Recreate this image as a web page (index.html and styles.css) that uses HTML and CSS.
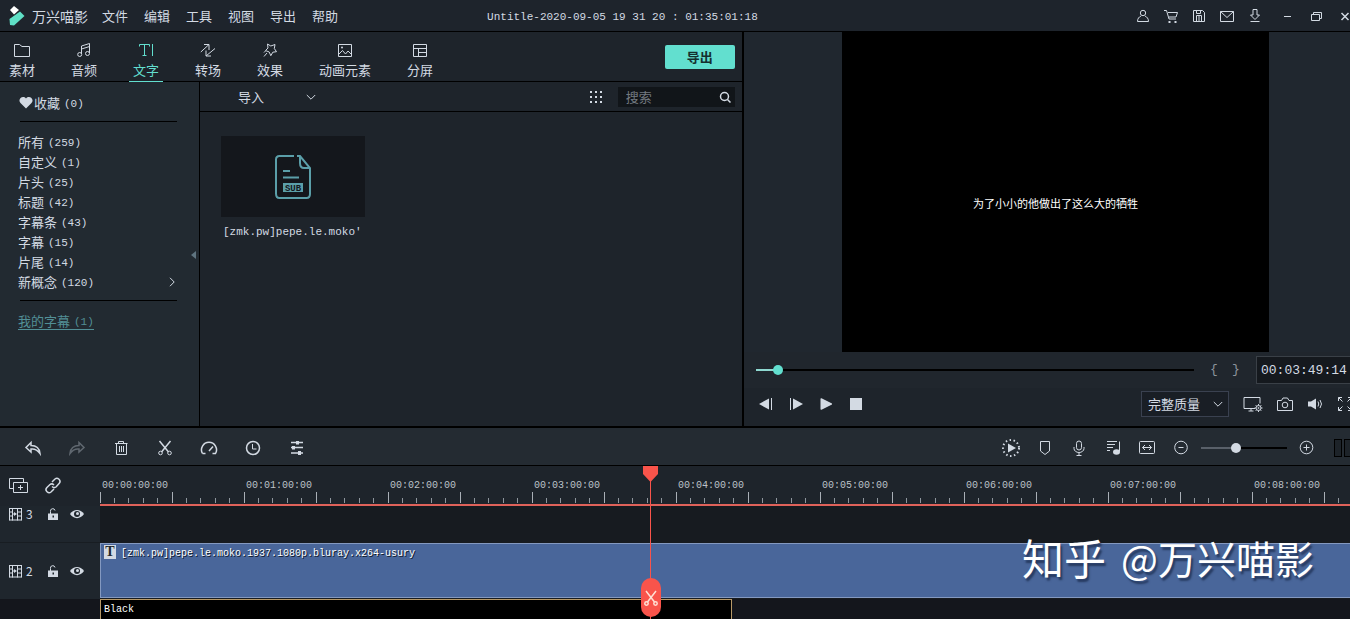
FILE: index.html
```html
<!DOCTYPE html>
<html lang="zh-CN">
<head>
<meta charset="utf-8">
<title>万兴喵影</title>
<link rel="stylesheet" href="styles.css">
</head>
<body>
<svg class="defs" aria-hidden="true">
  <symbol id="film" viewBox="0 0 14 14"><path d="M1.500 1v12.500M4.500 1v12.500M9.500 1v12.500M13.500 1v12.500M1.500 1.500h12M1.500 13h12M1.500 5h3M1.500 9h3M9.500 5h4M9.500 9h4M4.500 7H6"/><path class="fill" d="M6 5l3 2-3 2z"/></symbol>
  <symbol id="lock" viewBox="0 0 14 14"><path d="M4.500 7V4.500a2.300 2.300 0 0 1 4.500-1"/><path class="fill" d="M2 6.500h10V13H2z"/><path class="hole" d="M6.500 8.500h1.500v2H6.500z"/></symbol>
  <symbol id="eye" viewBox="0 0 14 14"><path class="fill" d="M0 7c3.500-5.500 10.500-5.500 14 0-3.500 5.500-10.500 5.500-14 0z"/><circle class="hole" cx="7" cy="7" r="3"/><circle class="fill" cx="7.500" cy="6.500" r="1.500"/></symbol>
  <symbol id="chevron" viewBox="0 0 10 10"><path d="M.8 3l4.200 4.200L9.200 3"/></symbol>
</svg>
<div class="app">
  <header class="titlebar">
    <svg class="logo" viewBox="0 0 18 22"><path d="M2 5l4-4 5 4-5 4.500z" fill="#fff"/><path d="M1.500 14L12 6.500 16.500 11 6 20.500 2 20z" fill="#5fe0c6"/></svg>
    <span class="brand">万兴喵影</span>
    <nav class="menu"><button>文件</button><button>编辑</button><button>工具</button><button>视图</button><button>导出</button><button>帮助</button></nav>
    <h1 class="project">Untitle-2020-09-05 19 31 20 : 01:35:01:18</h1>
    <div class="account">
      <button aria-label="账户"><svg viewBox="0 0 16 16"><circle cx="8" cy="5" r="2.700"/><path d="M2.500 13.500c0-3 1.500-4.500 3.500-5.500M13.500 13.500c0-3-1.500-4.500-3.500-5.500M2.500 13.500h11"/></svg></button>
      <button aria-label="购物车"><svg viewBox="0 0 16 16"><path d="M1 2.500h2.500L6 11h7M5 4.500h9.500L13 9H6"/><path class="fill" d="M5.500 13h2v2h-2zM11.500 13h2v2h-2z"/></svg></button>
      <button aria-label="保存"><svg viewBox="0 0 16 16"><path d="M2.500 2.500h9l2 2v9h-11zM5.500 13.500v-6h5v6M5.500 2.500v3h4v-3M8 7.500v6"/></svg></button>
      <button aria-label="消息"><svg viewBox="0 0 16 16"><path d="M1.500 3.500h13v10h-13zM1.500 3.500L8 9.500l6.500-6"/></svg></button>
      <button aria-label="下载"><svg viewBox="0 0 16 16"><path d="M6 1.500h4V7h2.500L8 11.500 3.500 7H6zM3.500 13.500h9"/></svg></button>
    </div>
    <div class="window">
      <button aria-label="最小化"><svg viewBox="0 0 16 16"><path d="M5 8.500h7"/></svg></button>
      <button aria-label="还原"><svg viewBox="0 0 16 16"><path d="M3.500 6.500h8v6h-8zM5.500 6.500v-2h8v6h-2"/></svg></button>
      <button aria-label="关闭"><svg viewBox="0 0 16 16"><path class="bold" d="M4.500 5l7 7M11.500 5l-7 7"/></svg></button>
    </div>
  </header>

  <main class="workspace">
    <section class="library">
      <div class="tabs">
        <button class="tab"><svg viewBox="0 0 16 16"><path d="M.5 2.500h5l2.500 2h7.500v10H.5z"/></svg>素材</button>
        <button class="tab"><svg viewBox="0 0 16 16"><path d="M5.500 12V4l8-2.500V11M5.500 7l8-2.500"/><circle cx="3.700" cy="12.500" r="2"/><circle cx="11.500" cy="11.500" r="2"/></svg>音频</button>
        <button class="tab active"><svg viewBox="0 0 16 16"><path d="M1.500 4.500v-2h10v2M6.500 2.500v11M4.500 13.500h4M14.500 2v12"/></svg>文字</button>
        <button class="tab"><svg viewBox="0 0 16 16"><path d="M.8 10L9 2.500M4 2.500h5V8M15 6.500L6 14M6 8.500V14h5"/></svg>转场</button>
        <button class="tab"><svg viewBox="0 0 16 16"><path d="M5.500 2l3.300 2 4.200-1.500-.7 4 2.200 3.200-3.700.5-2 3.500-1.600-3.700L3.500 8.500 6 6zM2 14.500L5 11M2 10.500L3.500 9"/></svg>效果</button>
        <button class="tab"><svg viewBox="0 0 16 16"><path d="M1.500 2.500h13v12h-13zM1.500 12.500l4-4 3 3.500 2.500-3 3.500 3.500"/><circle class="fill" cx="5" cy="5.500" r="1"/></svg>动画元素</button>
        <button class="tab"><svg viewBox="0 0 16 16"><path d="M1.500 2.500h13v12h-13zM1.500 6.500h13M6.500 6.500v8M6.500 10.500h8"/></svg>分屏</button>
        <button class="export">导出</button>
      </div>
      <div class="browser">
        <aside class="sidebar">
          <a class="favorite" href="#"><svg viewBox="0 0 14 14"><path class="fill" d="M7 12.500L1.500 7C-2 3 4-1.500 7 2.500c3-4 9 .5 5.500 4.500z"/></svg>收藏 <small>(0)</small></a>
          <ul class="categories">
            <li><a href="#">所有 <small>(259)</small></a></li>
            <li><a href="#">自定义 <small>(1)</small></a></li>
            <li><a href="#">片头 <small>(25)</small></a></li>
            <li><a href="#">标题 <small>(42)</small></a></li>
            <li><a href="#">字幕条 <small>(43)</small></a></li>
            <li><a href="#">字幕 <small>(15)</small></a></li>
            <li><a href="#">片尾 <small>(14)</small></a></li>
            <li><a href="#">新概念 <small>(120)</small><svg class="more" viewBox="0 0 10 10"><path d="M3 .8L7.200 5 3 9.200"/></svg></a></li>
          </ul>
          <a class="mine" href="#">我的字幕 <small>(1)</small></a>
          <button class="collapse" aria-label="收起"><svg viewBox="0 0 5 8"><path d="M5 0v8L0 4z"/></svg></button>
        </aside>
        <div class="assets">
          <div class="filter">
            <button class="import">导入<svg viewBox="0 0 10 10"><use href="#chevron"/></svg></button>
            <button class="view" aria-label="网格视图"><svg viewBox="0 0 14 14"><path class="fill" d="M1 1h2v2H1zM6 1h2v2H6zM11 1h2v2h-2zM1 6h2v2H1zM6 6h2v2H6zM11 6h2v2h-2zM1 11h2v2H1zM6 11h2v2H6zM11 11h2v2h-2z"/></svg></button>
            <label class="search"><input type="text" placeholder="搜索" aria-label="搜索"><svg viewBox="0 0 14 14"><circle cx="6.500" cy="6.500" r="4"/><path d="M9.500 9.500l3 3"/></svg></label>
          </div>
          <figure class="asset">
            <div class="thumb">
              <svg viewBox="0 0 36 44"><path d="M19 1H4.500Q1 1 1 4.500v34Q1 43 4.500 43h27q3.500 0 3.500-4V13L25 1h-3M25 1v7q0 5 4 5h6M8 16h7M8 22.500h16"/><path class="badge" d="M8 28h20v9H8z"/><text x="18" y="35.500">SUB</text></svg>
            </div>
            <figcaption>[zmk.pw]pepe.le.moko'</figcaption>
          </figure>
        </div>
      </div>
    </section>

    <section class="preview">
      <div class="stage"><div class="video"><p>为了小小的他做出了这么大的牺牲</p></div></div>
      <div class="scrub">
        <input class="seek" type="range" min="0" max="100" value="4" aria-label="播放进度">
        <button class="brace" aria-label="标记入点">{</button><button class="brace" aria-label="标记出点">}</button>
        <output class="timecode">00:03:49:14</output>
      </div>
      <div class="transport">
        <button aria-label="上一帧"><svg viewBox="0 0 16 16"><path class="fill" d="M11 2.500v11L1 8z"/><path d="M13.500 2v12"/></svg></button>
        <button aria-label="下一帧"><svg viewBox="0 0 16 16"><path d="M2.500 2v12"/><path class="fill" d="M5 2.500v11L15 8z"/></svg></button>
        <button aria-label="播放"><svg viewBox="0 0 16 16"><path class="fill" d="M2.500 3q0-1 1-.7L14 7.500v1L3.500 13.700q-1 .3-1-.7z"/></svg></button>
        <button aria-label="停止"><svg viewBox="0 0 16 16"><path class="fill" d="M2 2h12v12H2z"/></svg></button>
        <span class="quality"><select aria-label="播放质量"><option>完整质量</option></select><svg viewBox="0 0 10 10"><use href="#chevron"/></svg></span>
        <button class="wide" aria-label="显示设置"><svg viewBox="0 0 20 16"><path d="M12 12.500H1v-11h16v6M5.500 15h5M8 12.500V15"/><circle cx="15.500" cy="12" r="2.500"/><circle cx="15.500" cy="12" r=".6"/><path d="M15.500 8v1.500M15.500 14.500V16M11.500 12H13M18 12h1.500M12.700 9.200l1 1M17.300 13.800l1 1M18.300 9.200l-1 1M13.700 13.800l-1 1"/></svg></button>
        <button aria-label="快照"><svg viewBox="0 0 16 16"><path d="M.5 4.500h4L6 2h4.500L12 4.500h3.500v10H.5z"/><circle cx="8" cy="9" r="2.800"/></svg></button>
        <button aria-label="音量"><svg viewBox="0 0 16 16"><path class="fill" d="M1 5.500h3L9 2.500v11L4 10.500H1z"/><path d="M11 5.500q1.500 2.500 0 5M13 4q3 4 0 8"/></svg></button>
        <button aria-label="全屏"><svg viewBox="0 0 16 16"><path d="M5 1.500H1.500V5M1.500 1.500l4 4M11 1.500h3.500V5M14.500 1.500l-4 4M1.500 11v3.500H5M1.500 14.500l4-4M14.500 11v3.500H11M14.500 14.500l-4-4"/></svg></button>
      </div>
    </section>
  </main>

  <section class="timeline">
    <div class="toolbar">
      <div class="tools">
        <button aria-label="撤销"><svg viewBox="0 0 20 20"><path class="bold" d="M8 4.500L3 9.500l5 4.500v-3c4-.5 6.500 1 9 4.500-.5-4.500-3.500-8-9-8z"/></svg></button>
        <button class="dim" aria-label="重做"><svg viewBox="0 0 20 20"><path class="bold" d="M12 4.500l5 5-5 4.500v-3c-4-.5-6.500 1-9 4.500.5-4.500 3.500-8 9-8z"/></svg></button>
        <button aria-label="删除"><svg viewBox="0 0 20 20"><path d="M4 5.500h12.500M7.500 5.500v-2h5v2M5.500 6v10.500h10V6M8.500 8v6M10.500 8v6M12.500 8v6"/></svg></button>
        <button aria-label="分割"><svg viewBox="0 0 20 20"><path class="bold" d="M4.500 3l9 11M15.500 3l-9 11"/><circle cx="5.500" cy="15" r="1.800"/><circle cx="14.500" cy="15" r="1.800"/></svg></button>
        <button aria-label="速度"><svg viewBox="0 0 20 20"><path class="bold" d="M3.500 15.500a7.500 7.500 0 1 1 13 0h-3M3.500 15.500h3M10 13l4-4.500"/></svg></button>
        <button aria-label="时长"><svg viewBox="0 0 20 20"><circle class="bold" cx="10" cy="10" r="6.500"/><path d="M9.500 6v5h4"/></svg></button>
        <button aria-label="调整"><svg viewBox="0 0 20 20"><path class="bold" d="M4 4.500h12M4 9.500h12M4 15h12"/><path class="fill" d="M9 3h3v3.500H9zM5 8h3v3.500H5zM11 13h3v4h-3z"/></svg></button>
      </div>
      <div class="actions">
        <button aria-label="渲染预览"><svg viewBox="0 0 20 20"><circle class="dots" cx="10" cy="10" r="8"/><path class="fill" d="M7 5.500l8 4.500-8 4.500z"/></svg></button>
        <button aria-label="标记"><svg viewBox="0 0 20 20"><path d="M5.500 3.500h9V13L10 16.500 5.500 13z"/></svg></button>
        <button aria-label="录音"><svg viewBox="0 0 20 20"><rect x="7.500" y="3" width="5" height="9" rx="2.500"/><path d="M5 9v1.500a5 4 0 0 0 10 0V9M10 14.500V18M7.500 17.500h5"/></svg></button>
        <button aria-label="混音"><svg viewBox="0 0 20 20"><path d="M4 3.500h10M4 6.500h8M4 9.500h6M4 12.500h3M16.500 3.500v10"/><ellipse class="fill" cx="13.500" cy="14" rx="3.500" ry="2.800"/></svg></button>
        <button aria-label="适应窗口"><svg viewBox="0 0 20 20"><rect x="2.500" y="3.500" width="15" height="12" rx="1"/><path d="M5.500 9.500h9M8 7L5.500 9.500 8 12M12 7l2.500 2.500L12 12"/></svg></button>
        <button aria-label="缩小"><svg viewBox="0 0 20 20"><circle cx="10" cy="9.500" r="6.300"/><path d="M7.500 9.500h5"/></svg></button>
        <input class="scale" type="range" min="0" max="100" value="39" aria-label="时间线缩放">
        <button aria-label="放大"><svg viewBox="0 0 20 20"><circle cx="10.500" cy="9.500" r="6.300"/><path d="M7.500 9.500h6M10.500 6.500v6"/></svg></button>
        <span class="meter"><i></i><i></i></span>
      </div>
    </div>
    <div class="tracks">
      <div class="track-tools">
        <button aria-label="添加轨道"><svg viewBox="0 0 20 20"><path d="M4.500 12.500h-4v-10h14V6M4.500 6.500h14v10h-14zM11.500 9v5M9 11.500h5"/></svg></button>
        <button aria-label="链接"><svg viewBox="0 0 20 20"><path class="bold" d="M9 6l3-3q2-1.500 4 .3t.3 4L13 11q-2 1.500-4-.5M11 13l-3 3q-2 1.500-4-.3t-.3-4L7 8.500q2-1.500 4 .5"/></svg></button>
      </div>
      <div class="ruler"><span>00:00:00:00</span><span>00:01:00:00</span><span>00:02:00:00</span><span>00:03:00:00</span><span>00:04:00:00</span><span>00:05:00:00</span><span>00:06:00:00</span><span>00:07:00:00</span><span>00:08:00:00</span></div>
      <div class="head short"><svg viewBox="0 0 14 14"><use href="#film"/></svg><span>3</span><button aria-label="锁定轨道3"><svg viewBox="0 0 14 14"><use href="#lock"/></svg></button><button aria-label="显示轨道3"><svg viewBox="0 0 14 14"><use href="#eye"/></svg></button></div>
      <div class="lane"></div>
      <div class="head"><svg viewBox="0 0 14 14"><use href="#film"/></svg><span>2</span><button aria-label="锁定轨道2"><svg viewBox="0 0 14 14"><use href="#lock"/></svg></button><button aria-label="显示轨道2"><svg viewBox="0 0 14 14"><use href="#eye"/></svg></button></div>
      <div class="lane"><div class="clip subtitle"><b>T</b><span>[zmk.pw]pepe.le.moko.1937.1080p.bluray.x264-usury</span></div></div>
      <div class="head last"></div>
      <div class="lane last"><div class="clip black">Black</div></div>
      <div class="playhead">
        <svg class="flag" viewBox="0 0 16 16"><path d="M0 0h15v8l-7.500 8L0 8z"/></svg>
        <button class="cut" aria-label="在此分割"><svg viewBox="0 0 16 16"><path d="M3 1l8.500 11M13 1L4.500 12"/><circle cx="3.500" cy="13.500" r="1.700"/><circle cx="12.500" cy="13.500" r="1.700"/></svg></button>
      </div>
      <p class="watermark"><strong>知乎</strong><span>@万兴喵影</span></p>
    </div>
  </section>
</div>
</body>
</html>
```

FILE: styles.css
```css
* { box-sizing: border-box; }

body {
  margin: 0;
  overflow: hidden;
  background: #1e242b;
  color: #d3dae3;
  font: 13px/20px "Noto Sans CJK SC", sans-serif;
}

h1, p, ul, figure { margin: 0; padding: 0; }
ul { list-style: none; }
a { color: inherit; text-decoration: none; }
button { padding: 0; border: 0; background: none; color: inherit; font: inherit; white-space: nowrap; }
svg { display: block; flex: none; fill: none; stroke: currentColor; stroke-width: 1; }
small, .project, .asset figcaption, .timecode, .brace, .ruler, .clip {
  font-family: "Liberation Mono", monospace;
}
small { padding-top: 2px; font-size: 11px; }
.fill { fill: currentColor; stroke: none; }
.hole { fill: #1f262d; stroke: none; }
.bold { stroke-width: 1.500; }
.defs { position: absolute; width: 0; height: 0; }

.app { display: flex; flex-direction: column; height: 100vh; }

/* Title bar */
.titlebar {
  display: flex;
  align-items: center;
  height: 32px;
  padding: 0 0 0 8px;
  border-bottom: 1px solid #000;
  background: #1e242c;
}
.logo { width: 18px; height: 22px; margin-right: 6px; stroke: none; }
.brand { font-size: 14px; }
.menu { display: flex; gap: 16px; margin-left: 14px; }
.project { flex: 1; padding: 2px 0 0 149px; font-size: 11px; font-weight: 400; white-space: nowrap; }
.account { display: flex; gap: 12px; }
.window { display: flex; gap: 13px; margin: 0 -3px 0 16px; }
.titlebar button svg { width: 16px; height: 16px; }

/* Workspace */
.workspace {
  display: grid;
  grid-template-columns: 551fr 449fr;
  flex: 1;
  min-height: 0;
  border-bottom: 2px solid #000;
}
.library { display: flex; flex-direction: column; min-width: 0; border-right: 2px solid #000; }
.tabs {
  display: flex;
  gap: 28px;
  height: 50px;
  padding: 0 7px 0 5px;
  border-bottom: 1px solid #000;
}
.tab {
  display: flex;
  flex-direction: column;
  align-items: center;
  gap: 2px;
  height: 50px;
  padding: 10px 4px 0;
  border-bottom: 1px solid transparent;
}
.tab svg { width: 16px; height: 16px; }
.tab.active { border-color: #62dfcf; color: #62dfcf; }
.export {
  width: 70px;
  height: 24px;
  margin: 13px 0 0 auto;
  border-radius: 2px;
  background: #62dfcf;
  color: #14302f;
  font-weight: 700;
}

.browser { display: grid; grid-template-columns: 200px 1fr; flex: 1; min-height: 0; }
.sidebar {
  position: relative;
  padding: 11px 22px 0 18px;
  border-right: 1px solid #000;
  background: #222a31;
}
.sidebar a { display: flex; align-items: center; gap: 4px; height: 20px; }
.favorite svg { width: 14px; height: 14px; }
.sidebar .favorite { gap: 1px; padding-left: 1px; }
.favorite small { margin-left: 3px; }
.categories {
  margin: 8px 0 11px 2px;
  padding: 10px 0 8px;
  border-top: 1px solid #000;
  border-bottom: 1px solid #000;
}
.categories li { margin-left: -2px; }
.more { width: 10px; height: 10px; margin-left: auto; }
.sidebar .mine { width: fit-content; height: 18px; border-bottom: 1px solid #528f96; color: #528f96; }
.collapse { position: absolute; top: 49%; right: 3px; }
.collapse svg { width: 5px; height: 8px; fill: #5f7480; stroke: none; }

.filter {
  display: flex;
  align-items: center;
  height: 30px;
  padding: 0 7px 0 38px;
  border-bottom: 1px solid #000;
}
.import { display: flex; align-items: center; gap: 42px; }
.import svg { width: 10px; height: 10px; }
.view { margin: 0 15px 0 auto; }
.view svg { width: 14px; height: 14px; }
.search { display: flex; align-items: center; width: 117px; height: 20px; padding: 0 3px 0 8px; background: #111519; }
.search input { width: 100%; min-width: 0; padding: 0; border: 0; background: none; color: inherit; font: inherit; }
.search input::placeholder { color: #737980; }
.search svg { width: 14px; height: 14px; stroke-width: 1.500; }

.asset { width: 144px; margin: 24px 0 0 21px; }
.thumb { display: grid; place-items: center; height: 81px; background: #14171c; }
.thumb svg { width: 36px; height: 44px; color: #5b9fa9; stroke-width: 2; }
.badge { fill: #5b9fa9; stroke: none; }
.thumb text { fill: #14171c; stroke: none; font: 700 9px "Liberation Mono", monospace; text-anchor: middle; }
.asset figcaption { padding: 5px 2px; font-size: 11px; white-space: nowrap; }

/* Preview */
.preview { display: flex; flex-direction: column; min-width: 0; margin-right: -17px; }
.stage { display: flex; justify-content: center; flex: 1; min-height: 0; background: #20272f; }
.video { display: grid; place-items: center; height: 100%; aspect-ratio: 4 / 3; background: #000; }
.video p { padding-top: 22px; color: #fff; font-size: 11px; white-space: nowrap; }
.scrub { display: flex; align-items: center; height: 36px; padding-left: 12px; background: #20262d; }
input[type="range"] { height: 10px; margin: 0; appearance: none; background: none; }
input[type="range"]::-webkit-slider-runnable-track { height: 2px; }
input[type="range"]::-webkit-slider-thumb {
  width: 10px;
  height: 10px;
  margin-top: -4px;
  appearance: none;
  border-radius: 50%;
  background: #d3dae3;
}
.seek { flex: 1; min-width: 0; }
.seek::-webkit-slider-runnable-track { background: linear-gradient(to right, #8fd8d0 5%, #000 5%); }
input.seek[type="range"]::-webkit-slider-thumb { background: #62dfcf; }
.brace { width: 22px; color: #8d949c; font-size: 13px; }
.seek + .brace { margin-left: 9px; }
.timecode {
  width: 111px;
  margin-left: 9px;
  padding: 4px 4px 2px;
  border: 1px solid #3a4047;
  background: #15191e;
  font-size: 13px;
}
.transport { display: flex; align-items: center; gap: 14px; height: 38px; padding: 0 14px 6px 14px; }
.transport button svg { width: 16px; height: 16px; }
.transport .wide svg { width: 20px; }
.quality { display: grid; align-items: center; width: 88px; margin-left: auto; }
.quality select {
  grid-area: 1 / 1;
  width: 100%;
  height: 26px;
  padding: 0 6px;
  appearance: none;
  border: 1px solid #3a4150;
  border-radius: 0;
  background: #191e25;
  color: inherit;
  font: inherit;
}
.quality svg { grid-area: 1 / 1; justify-self: end; width: 10px; height: 10px; margin-right: 6px; pointer-events: none; }

/* Timeline */
.toolbar {
  display: flex;
  justify-content: space-between;
  align-items: center;
  height: 38px;
  padding-top: 2px;
  border-bottom: 1px solid #000;
  background: #242b32;
}
.toolbar svg, .track-tools svg { width: 20px; height: 20px; }
.tools { display: flex; gap: 24px; padding-left: 23px; }
.dim { color: #606870; }
.toolbar .dots { stroke-width: 2; stroke-dasharray: 1.500 2.500; }
.actions { display: flex; align-items: center; gap: 14px; margin-right: -2px; }
.scale { width: 86px; }
.actions .scale { margin: 0 -5px 0 -4px; }
.scale::-webkit-slider-runnable-track { background: linear-gradient(to right, #596069 40%, #000 40%); }
.meter { display: flex; gap: 2px; margin-left: 4px; }
.meter i { width: 8px; height: 18px; border: 1px solid #000; background: #1d2329; }

.tracks {
  position: relative;
  display: grid;
  grid-template-columns: 100px 1fr;
  grid-template-rows: 40px 37px 56px 20px;
  overflow: hidden;
}
.track-tools { display: flex; gap: 14px; padding: 10px 9px; }
.ruler {
  display: flex;
  overflow: hidden;
  border-bottom: 2px solid #e0625a;
  background:
    linear-gradient(to right, #a9afb6 1px, transparent 1px) 0 26px / 72px 11px repeat-x,
    linear-gradient(to right, transparent 14px, #8f969d 14px 15px, transparent 15px 28px, #8f969d 28px 29px, transparent 29px 43px, #8f969d 43px 44px, transparent 44px 57px, #8f969d 57px 58px, transparent 58px) 0 32px / 72px 5px repeat-x;
}
.ruler span { flex: 0 0 144px; padding: 10px 0 0 2px; color: #bcc2c8; font-size: 10px; }
.head { display: flex; align-items: center; padding: 0 8px; font-size: 12px; background: #1f262d; }
.head svg { width: 14px; height: 14px; }
.head span { width: 16px; padding-left: 4px; }
.head button { margin-left: 8px; }
.head button + button { margin-left: 10px; }
.head.short { align-items: flex-start; border-bottom: 1px solid #181d22; }
.head.short svg { margin-top: 1px; }
.head.short span { line-height: 16px; }
.head.last, .lane.last { background: #14161c; }
.lane { min-width: 0; background: #171b20; }
.clip { height: 55px; padding: 1px 3px; color: #fff; font-size: 10px; white-space: nowrap; }
.subtitle {
  display: flex;
  align-items: flex-start;
  gap: 5px;
  border: 1px solid #8499c0;
  border-right: 0;
  background: #49669a;
  text-shadow: 1px 1px 0 #101a2c;
}
.subtitle b {
  width: 12px;
  height: 14px;
  background: #d3dae3;
  color: #22282e;
  font: 700 14px/14px "Liberation Serif", serif;
  text-align: center;
  text-shadow: none;
}
.subtitle span { line-height: 18px; }
.black { width: 632px; border: 1px solid #b89a68; background: #000; line-height: 18px; }

.playhead { position: absolute; top: 0; bottom: 0; left: 650px; width: 1px; background: #f9544b; }
.flag { position: absolute; top: 0; left: -7px; width: 16px; height: 16px; fill: #f9544b; stroke: none; }
.cut {
  position: absolute;
  bottom: 2px;
  left: -9px;
  display: grid;
  place-items: center;
  width: 20px;
  height: 39px;
  border-radius: 10px;
  background: #f9544b;
  color: #ffe0d4;
}
.cut svg { width: 16px; height: 16px; stroke-width: 1.500; }
.watermark {
  position: absolute;
  right: 36px;
  bottom: 38px;
  display: flex;
  align-items: center;
  gap: 15px;
  color: #fff;
  font-size: 39px;
  line-height: 48px;
  text-shadow: 2px 3px 2px #263a60;
  white-space: nowrap;
}
.watermark strong { font-size: 42px; font-weight: 400; }
```
